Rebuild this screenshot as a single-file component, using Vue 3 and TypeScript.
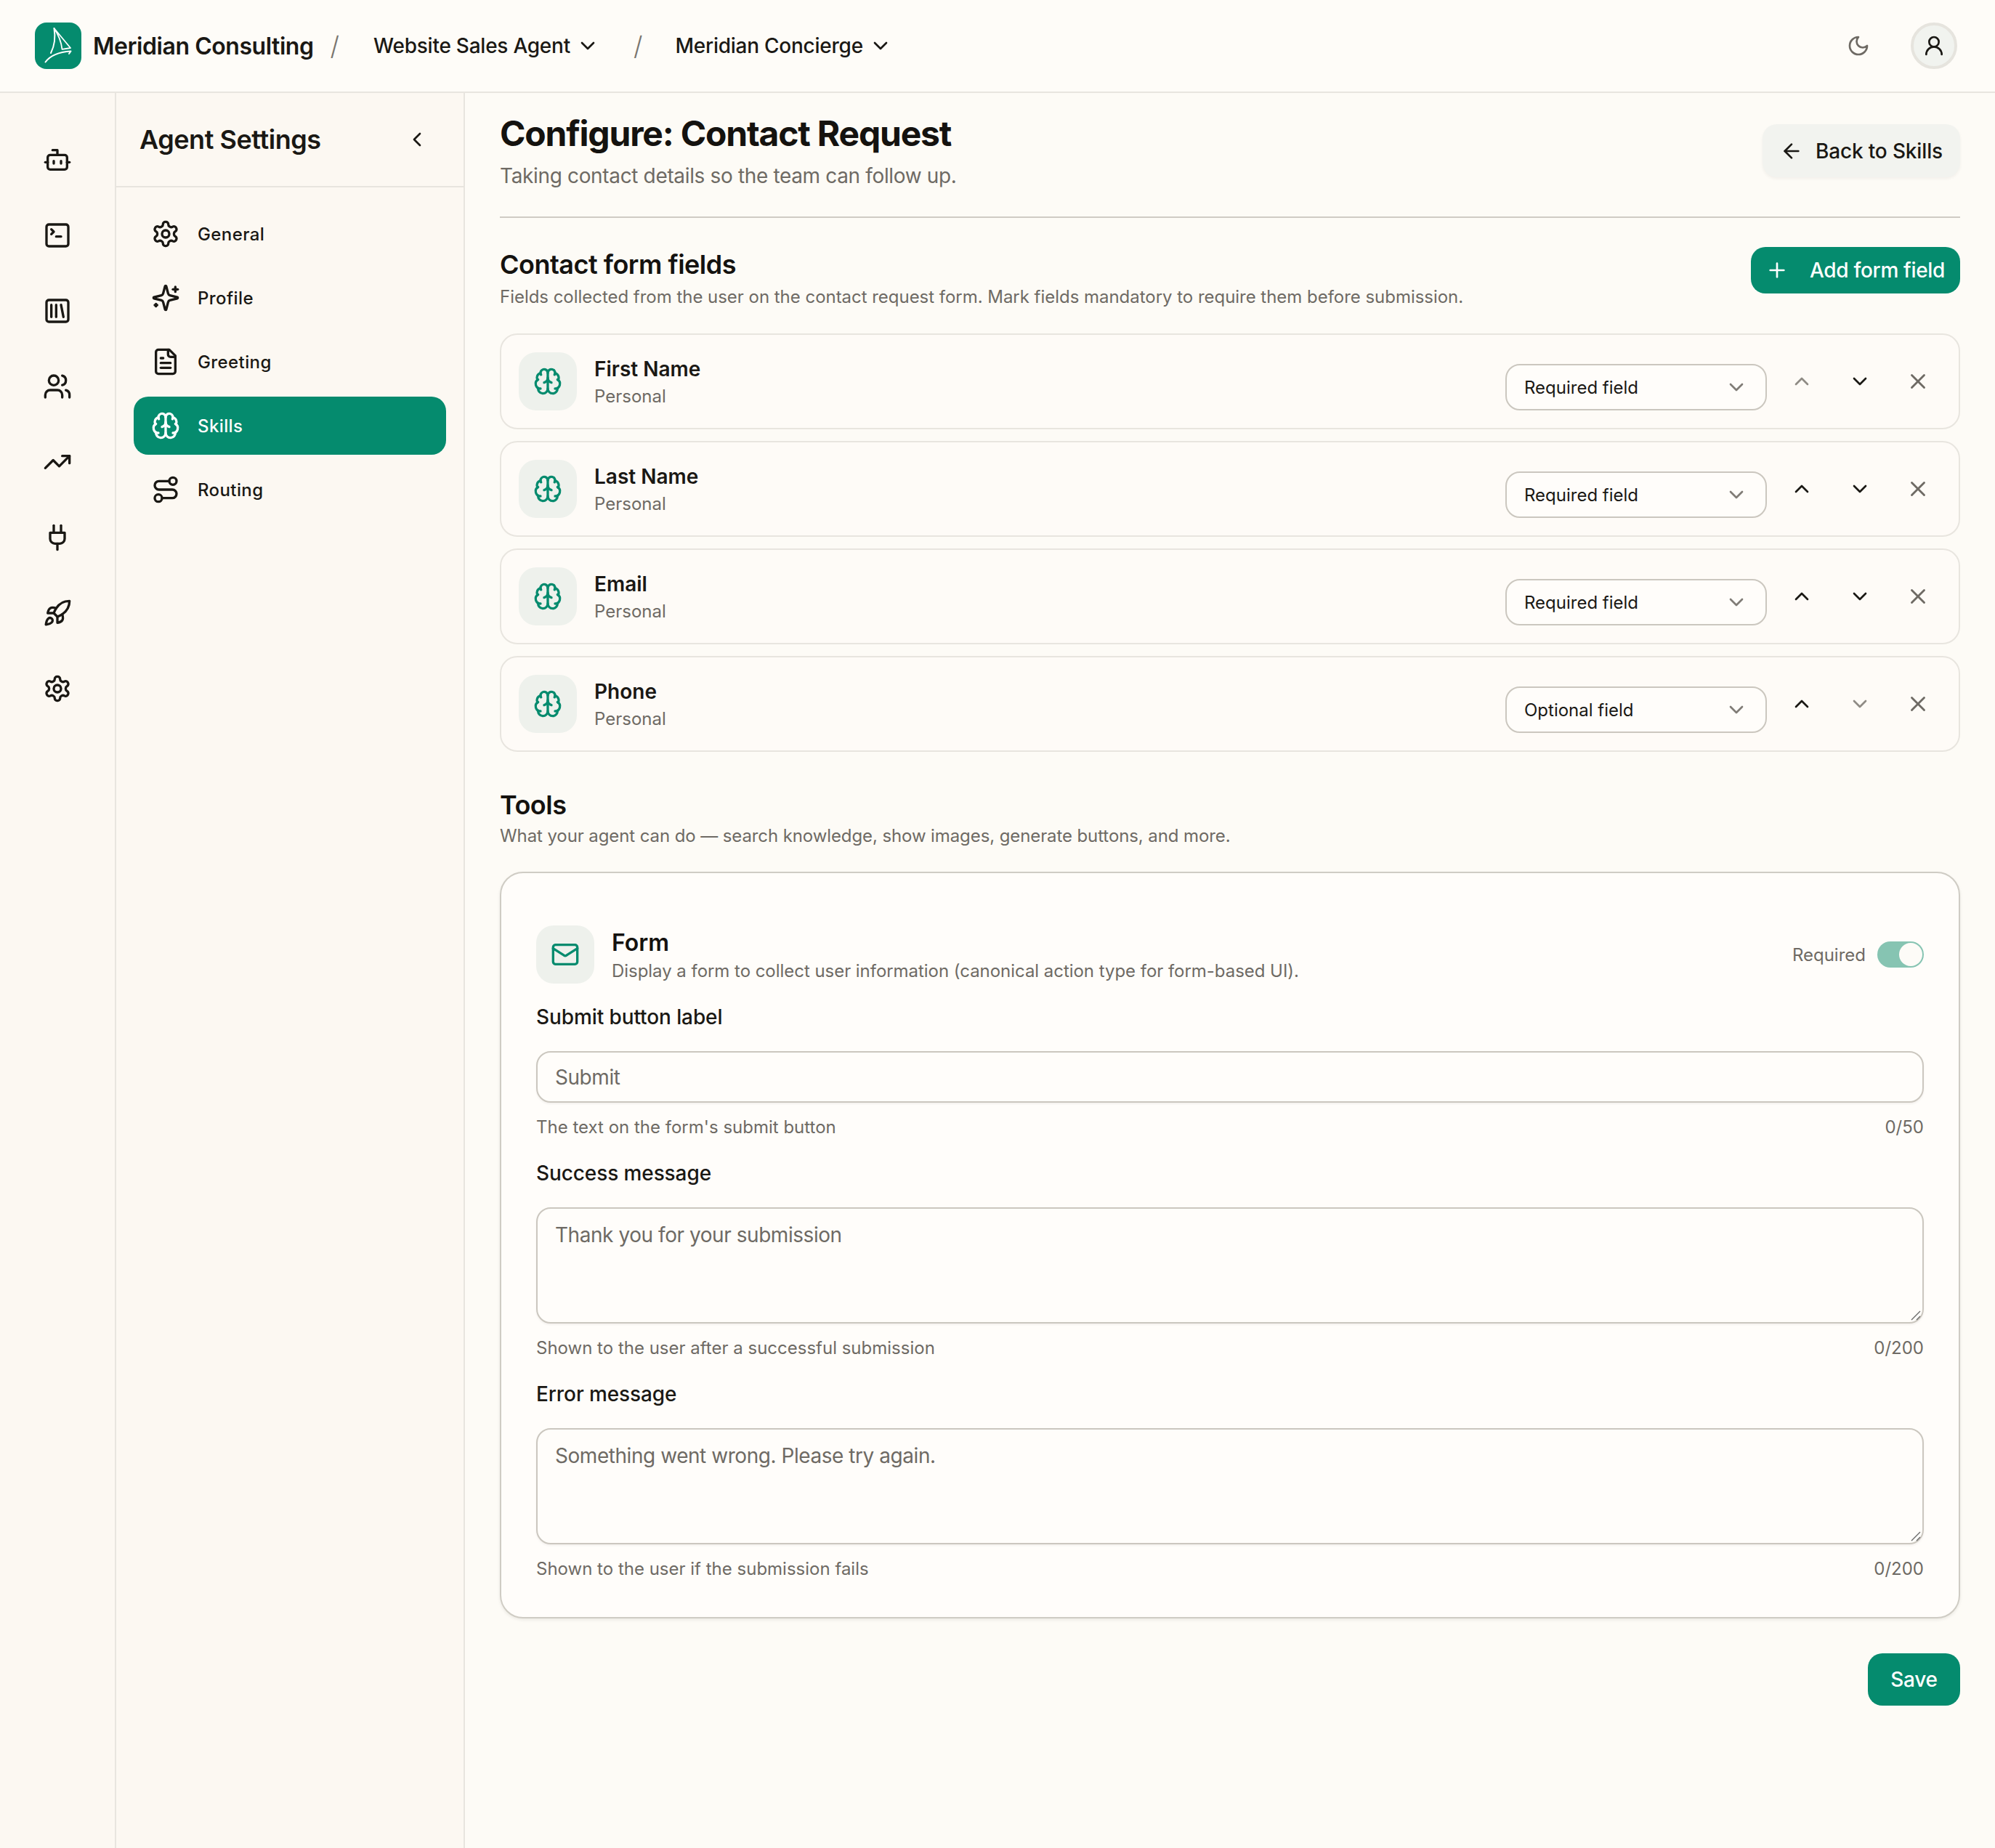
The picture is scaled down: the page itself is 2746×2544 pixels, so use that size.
<script setup lang="ts">
import { h } from 'vue'

const icons: Record<string, string[]> = {
  bot: ['M12 8V4H8', 'M6 8h12a2 2 0 0 1 2 2v8a2 2 0 0 1-2 2H6a2 2 0 0 1-2-2v-8a2 2 0 0 1 2-2z', 'M2 14h2', 'M20 14h2', 'M15 13v2', 'M9 13v2'],
  terminal: ['m7 11 2-2-2-2', 'M11 13h4', 'M5 3h14a2 2 0 0 1 2 2v14a2 2 0 0 1-2 2H5a2 2 0 0 1-2-2V5a2 2 0 0 1 2-2z'],
  library: ['M5 3h14a2 2 0 0 1 2 2v14a2 2 0 0 1-2 2H5a2 2 0 0 1-2-2V5a2 2 0 0 1 2-2z', 'M7 7v10', 'M11 7v10', 'm15 7 2 10'],
  users: ['M16 21v-2a4 4 0 0 0-4-4H6a4 4 0 0 0-4 4v2', 'M13 7a4 4 0 1 1-8 0 4 4 0 0 1 8 0z', 'M22 21v-2a4 4 0 0 0-3-3.87', 'M16 3.13a4 4 0 0 1 0 7.75'],
  trending: ['M22 7 13.5 15.5 8.5 10.5 2 17', 'M16 7h6v6'],
  plug: ['M12 22v-5', 'M9 8V2', 'M15 8V2', 'M18 8v5a4 4 0 0 1-4 4h-4a4 4 0 0 1-4-4V8Z'],
  rocket: ['M4.5 16.5c-1.5 1.26-2 5-2 5s3.74-.5 5-2c.71-.84.7-2.13-.09-2.91a2.18 2.18 0 0 0-2.91-.09z', 'm12 15-3-3a22 22 0 0 1 2-3.95A12.88 12.88 0 0 1 22 2c0 2.72-.78 7.5-6 11a22.35 22.35 0 0 1-4 2z', 'M9 12H4s.55-3.03 2-4c1.62-1.08 5 0 5 0', 'M12 15v5s3.03-.55 4-2c1.08-1.62 0-5 0-5'],
  settings: ['M12.22 2h-.44a2 2 0 0 0-2 2v.18a2 2 0 0 1-1 1.73l-.43.25a2 2 0 0 1-2 0l-.15-.08a2 2 0 0 0-2.73.73l-.22.38a2 2 0 0 0 .73 2.73l.15.1a2 2 0 0 1 1 1.72v.51a2 2 0 0 1-1 1.74l-.15.09a2 2 0 0 0-.73 2.73l.22.38a2 2 0 0 0 2.73.73l.15-.08a2 2 0 0 1 2 0l.43.25a2 2 0 0 1 1 1.73V20a2 2 0 0 0 2 2h.44a2 2 0 0 0 2-2v-.18a2 2 0 0 1 1-1.73l.43-.25a2 2 0 0 1 2 0l.15.08a2 2 0 0 0 2.73-.73l.22-.39a2 2 0 0 0-.73-2.73l-.15-.08a2 2 0 0 1-1-1.74v-.5a2 2 0 0 1 1-1.74l.15-.09a2 2 0 0 0 .73-2.73l-.22-.38a2 2 0 0 0-2.73-.73l-.15.08a2 2 0 0 1-2 0l-.43-.25a2 2 0 0 1-1-1.73V4a2 2 0 0 0-2-2z', 'M15 12a3 3 0 1 1-6 0 3 3 0 0 1 6 0z'],
  sparkles: ['M9.937 15.5A2 2 0 0 0 8.5 14.063l-6.135-1.582a.5.5 0 0 1 0-.962L8.5 9.936A2 2 0 0 0 9.937 8.5l1.582-6.135a.5.5 0 0 1 .963 0L14.063 8.5A2 2 0 0 0 15.5 9.937l6.135 1.581a.5.5 0 0 1 0 .964L15.5 14.063a2 2 0 0 0-1.437 1.437l-1.582 6.135a.5.5 0 0 1-.963 0z', 'M20 3v4', 'M22 5h-4', 'M4 17v2', 'M5 18H3'],
  file: ['M15 2H6a2 2 0 0 0-2 2v16a2 2 0 0 0 2 2h12a2 2 0 0 0 2-2V7Z', 'M14 2v4a2 2 0 0 0 2 2h4', 'M10 9H8', 'M16 13H8', 'M16 17H8'],
  brain: ['M12 18V5', 'M15 13a4.17 4.17 0 0 1-3-4 4.17 4.17 0 0 1-3 4', 'M17.598 6.5A3 3 0 1 0 12 5a3 3 0 1 0-5.598 1.5', 'M17.997 5.125a4 4 0 0 1 2.526 5.77', 'M18 18a4 4 0 0 0 2-7.464', 'M19.967 17.483A4 4 0 1 1 12 18a4 4 0 1 1-7.967-.517', 'M6 18a4 4 0 0 1-2-7.464', 'M6.003 5.125a4 4 0 0 0-2.526 5.77'],
  route: ['M9 19a3 3 0 1 1-6 0 3 3 0 0 1 6 0z', 'M9 19h8.5a3.5 3.5 0 0 0 0-7h-11a3.5 3.5 0 0 1 0-7H15', 'M21 5a3 3 0 1 1-6 0 3 3 0 0 1 6 0z'],
  moon: ['M12 3a6 6 0 0 0 9 9 9 9 0 1 1-9-9Z'],
  user: ['M17 8a5 5 0 1 1-10 0 5 5 0 0 1 10 0z', 'M20 21a8 8 0 0 0-16 0'],
  down: ['m6 9 6 6 6-6'],
  up: ['m18 15-6-6-6 6'],
  left: ['m15 18-6-6 6-6'],
  arrowLeft: ['m12 19-7-7 7-7', 'M19 12H5'],
  plus: ['M5 12h14', 'M12 5v14'],
  x: ['M18 6 6 18', 'm6 6 12 12'],
  mail: ['M4 4h16a2 2 0 0 1 2 2v12a2 2 0 0 1-2 2H4a2 2 0 0 1-2-2V6a2 2 0 0 1 2-2z', 'm22 7-8.991 5.727a2 2 0 0 1-2.009 0L2 7'],
}

const Icon = (props: { name: string; size?: number }) =>
  h(
    'svg',
    {
      width: props.size ?? 40,
      height: props.size ?? 40,
      viewBox: '0 0 24 24',
      fill: 'none',
      stroke: 'currentColor',
      'stroke-width': 2,
      'stroke-linecap': 'round',
      'stroke-linejoin': 'round',
    },
    icons[props.name].map((d) => h('path', { d })),
  )
Icon.props = ['name', 'size']

const railIcons = ['bot', 'terminal', 'library', 'users', 'trending', 'plug', 'rocket', 'settings']
const navItems = [
  { label: 'General', icon: 'settings', active: false },
  { label: 'Profile', icon: 'sparkles', active: false },
  { label: 'Greeting', icon: 'file', active: false },
  { label: 'Skills', icon: 'brain', active: true },
  { label: 'Routing', icon: 'route', active: false },
]
const fields = [
  { name: 'First Name', mode: 'Required field', upOff: true, downOff: false },
  { name: 'Last Name', mode: 'Required field', upOff: false, downOff: false },
  { name: 'Email', mode: 'Required field', upOff: false, downOff: false },
  { name: 'Phone', mode: 'Optional field', upOff: false, downOff: true },
]
</script>

<template>
  <div class="page">
    <header class="topbar">
      <div class="logo">
        <svg width="64" height="64" viewBox="0 0 64 64" fill="none" stroke="#fff" stroke-linecap="round" stroke-linejoin="round">
          <path d="M26.5 8 L49 35 L37.5 36.8 C36.5 28 34.5 20 26.5 8 Z" stroke-width="1.8" />
          <path d="M26.5 8 C28.5 20 27 32 22 42" stroke-width="2" />
          <path d="M14.5 54.5 C21 45.5 34 40.5 49.5 39.5 L47 43" stroke-width="2" />
        </svg>
      </div>
      <span class="brand">Meridian Consulting</span>
      <span class="slash slash-a">/</span>
      <button class="crumb crumb-a">Website Sales Agent<Icon name="down" :size="32" /></button>
      <span class="slash slash-b">/</span>
      <button class="crumb crumb-b">Meridian Concierge<Icon name="down" :size="32" /></button>
      <div class="top-right">
        <span class="moon"><Icon name="moon" :size="32" /></span>
        <span class="avatar"><Icon name="user" :size="32" /></span>
      </div>
    </header>

    <div class="body">
      <aside class="rail">
        <span v-for="name in railIcons" :key="name" class="rail-item"><Icon :name="name" /></span>
      </aside>

      <aside class="side">
        <div class="side-head">
          <h2>Agent Settings</h2>
          <Icon name="left" :size="32" />
        </div>
        <nav class="side-nav">
          <a v-for="item in navItems" :key="item.label" class="nav-item" :class="{ active: item.active }">
            <Icon :name="item.icon" />
            <span class="nav-label">{{ item.label }}</span>
          </a>
        </nav>
      </aside>

      <main class="main">
        <div class="page-head">
          <div>
            <h1>Configure: Contact Request</h1>
            <p class="lead">Taking contact details so the team can follow up.</p>
          </div>
          <button class="back-btn"><Icon name="arrowLeft" :size="32" />Back to Skills</button>
        </div>

        <section class="fields-head">
          <div class="fields-copy">
            <h3>Contact form fields</h3>
            <p class="note">Fields collected from the user on the contact request form. Mark fields mandatory to require them before submission.</p>
          </div>
          <button class="add-btn"><Icon name="plus" :size="32" />Add form field</button>
        </section>

        <div class="field-list">
          <div v-for="f in fields" :key="f.name" class="field-card">
            <span class="icon-box"><Icon name="brain" /></span>
            <div class="field-text">
              <div class="field-name">{{ f.name }}</div>
              <div class="field-kind">Personal</div>
            </div>
            <div class="select"><span>{{ f.mode }}</span><Icon name="down" :size="32" /></div>
            <div class="row-actions">
              <button class="act" :class="{ off: f.upOff }"><Icon name="up" :size="32" /></button>
              <button class="act" :class="{ off: f.downOff }"><Icon name="down" :size="32" /></button>
              <button class="act del"><Icon name="x" :size="34" /></button>
            </div>
          </div>
        </div>

        <section class="tools-head">
          <h3>Tools</h3>
          <p class="note">What your agent can do — search knowledge, show images, generate buttons, and more.</p>
        </section>

        <div class="form-card">
          <div class="form-top">
            <span class="icon-box"><Icon name="mail" /></span>
            <div class="form-title">
              <div class="form-name">Form</div>
              <div class="form-desc">Display a form to collect user information (canonical action type for form-based UI).</div>
            </div>
            <div class="req">
              <span>Required</span>
              <span class="toggle"><span class="thumb"></span></span>
            </div>
          </div>

          <div class="group">
            <label class="label">Submit button label</label>
            <input class="input" placeholder="Submit" />
            <div class="help"><span>The text on the form's submit button</span><span>0/50</span></div>
          </div>
          <div class="group">
            <label class="label">Success message</label>
            <div class="area-wrap">
              <textarea class="input area" placeholder="Thank you for your submission"></textarea>
              <svg class="grip" width="14" height="14" viewBox="0 0 14 14"><path d="M1 13 13 1M8 13l5-5" stroke="#6a6a6a" stroke-width="1.4" fill="none" /></svg>
            </div>
            <div class="help"><span>Shown to the user after a successful submission</span><span>0/200</span></div>
          </div>
          <div class="group">
            <label class="label">Error message</label>
            <div class="area-wrap">
              <textarea class="input area" placeholder="Something went wrong. Please try again."></textarea>
              <svg class="grip" width="14" height="14" viewBox="0 0 14 14"><path d="M1 13 13 1M8 13l5-5" stroke="#6a6a6a" stroke-width="1.4" fill="none" /></svg>
            </div>
            <div class="help"><span>Shown to the user if the submission fails</span><span>0/200</span></div>
          </div>
        </div>

        <div class="save-row"><button class="save">Save</button></div>
      </main>
    </div>
  </div>
</template>

<style>
html, body { margin: 0; background: #fdfbf6; }
</style>

<style scoped>
* { box-sizing: border-box; }
.page {
  width: 2746px;
  height: 2544px;
  display: flex;
  flex-direction: column;
  overflow: hidden;
  background: #fdfbf6;
  color: #1a1814;
  font-family: Inter, "Liberation Sans", sans-serif;
}
button { font-family: inherit; border: 0; background: none; color: inherit; padding: 0; }

.topbar {
  height: 128px;
  flex: none;
  display: flex;
  align-items: center;
  padding: 0 52px 0 48px;
  background: #fefcf8;
  border-bottom: 2px solid #e8e5df;
}
.logo { width: 64px; height: 64px; border-radius: 16px; background: #058b6e; flex: none; display: flex; }
.brand { margin-left: 16px; font-size: 32px; font-weight: 600; letter-spacing: -0.45px; color: #1a1814; }
.slash { font-size: 36px; color: #79756f; font-weight: 300; }
.slash-a { margin-left: 23px; }
.slash-b { margin-left: 47px; }
.crumb { display: flex; align-items: center; gap: 8px; font-size: 28px; font-weight: 500; letter-spacing: -0.25px; }
.crumb-a { margin-left: 47px; }
.crumb-b { margin-left: 45px; }
.top-right { margin-left: auto; display: flex; align-items: center; gap: 56px; }
.moon { display: flex; color: #6e6a64; }
.avatar {
  width: 64px; height: 64px; border-radius: 50%;
  background: #f1f3ef; border: 4px solid #e6e4de;
  display: flex; align-items: center; justify-content: center;
}

.body { flex: 1; display: flex; min-height: 0; }
.rail {
  width: 160px; flex: none;
  display: flex; flex-direction: column; align-items: center;
  gap: 24px;
  padding-top: 52px;
  background: #fcf8f2;
  border-right: 2px solid #e8e5df;
}
.rail-item { width: 80px; height: 80px; display: flex; align-items: center; justify-content: center; }

.side { width: 480px; flex: none; background: #fcf8f2; border-right: 2px solid #e8e5df; }
.side-head {
  height: 130px;
  display: flex; align-items: center; justify-content: space-between;
  padding: 0 48px 0 32px;
  border-bottom: 2px solid #e8e5df;
}
.side-head h2 { margin: 0; font-size: 36px; font-weight: 600; letter-spacing: -0.45px; }
.side-nav { display: flex; flex-direction: column; gap: 8px; padding: 24px; }
.nav-item {
  height: 80px; border-radius: 20px; padding: 0 24px;
  display: flex; align-items: center; gap: 24px;
  font-size: 24px; font-weight: 500; letter-spacing: 0.4px;
}
.nav-label { padding-top: 1px; }
.nav-item.active { background: #058b6e; color: #fff; }

.main { flex: 1; min-width: 0; padding: 0 48px; display: flex; flex-direction: column; }
.page-head {
  height: 172px;
  flex: none;
  display: flex; justify-content: space-between; align-items: flex-start;
  padding-top: 30px;
  border-bottom: 2px solid #cfcbc4;
}
h1 { margin: 0; font-size: 48px; line-height: 52px; font-weight: 700; letter-spacing: -1.2px; color: #14120f; }
.lead { margin: 12px 0 0; font-size: 28px; line-height: 40px; color: #6e6a64; letter-spacing: -0.35px; }
.back-btn {
  margin-top: 13px;
  height: 73px; padding: 0 24px;
  display: flex; align-items: center; gap: 17px;
  border-radius: 20px;
  background: #f2f3ef;
  box-shadow: 0 2px 4px rgba(30, 25, 15, 0.05);
  font-size: 28px; font-weight: 500; letter-spacing: -0.15px;
}

h3 { margin: 0; font-size: 36px; line-height: 44px; font-weight: 600; letter-spacing: -0.5px; color: #14120f; }
.note { margin: 6px 0 0; font-size: 24px; line-height: 34px; letter-spacing: -0.03px; color: #6e6a64; }
.fields-head { display: flex; justify-content: space-between; align-items: flex-start; padding-top: 40px; flex: none; }
.fields-copy { margin-top: 2px; }
.add-btn {
  height: 64px; padding: 0 21px 0 20px;
  display: flex; align-items: center; gap: 29px;
  background: #058b6e; color: #fff; border-radius: 20px;
  font-size: 28px; font-weight: 500; letter-spacing: -0.33px;
}
.field-list { display: flex; flex-direction: column; gap: 16px; margin-top: 33px; flex: none; }
.field-card {
  height: 132px; padding: 24px;
  display: flex; align-items: center;
  background: #fefbf7;
  border: 2px solid #e8e5df; border-radius: 24px;
}
.icon-box {
  width: 80px; height: 80px; flex: none;
  display: flex; align-items: center; justify-content: center;
  background: #eef1ec; color: #058b6e; border-radius: 24px;
}
.field-text { margin-left: 24px; flex: 1; }
.field-name { font-size: 28px; line-height: 40px; font-weight: 600; color: #1a1814; }
.field-kind { font-size: 24px; line-height: 34px; margin-top: 1px; color: #6e6a64; }
.select {
  width: 360px; height: 64px; margin-top: 16px;
  display: flex; align-items: center; justify-content: space-between;
  padding: 0 24px;
  background: #fffdfa;
  border: 2px solid #cbc7bf; border-radius: 20px;
  font-size: 24px;
}
.select svg { color: #807c76; }
.row-actions { display: flex; gap: 16px; margin-left: 16px; }
.act { width: 64px; height: 64px; display: flex; align-items: center; justify-content: center; color: #1a1814; }
.act.off { color: #8f8b85; }
.act.del { color: #6e6a64; }

.tools-head { margin-top: 51px; flex: none; }
.tools-head .note { margin-top: 4px; letter-spacing: -0.1px; }
.form-card {
  margin-top: 32px;
  height: 1028px;
  flex: none;
  padding: 72px 48px 0;
  background: #fffdfa;
  border: 2px solid #cfccc4; border-radius: 32px;
  box-shadow: 0 2px 4px rgba(30, 25, 15, 0.08);
}
.form-top { display: flex; align-items: flex-start; height: 80px; margin-bottom: 26px; }
.form-title { margin-left: 24px; flex: 1; padding-top: 2px; }
.form-name { font-size: 32px; line-height: 44px; font-weight: 600; color: #14120f; }
.form-desc { font-size: 24px; line-height: 34px; letter-spacing: -0.04px; color: #6e6a64; }
.req { display: flex; align-items: center; gap: 16px; font-size: 24px; color: #6e6a64; margin-top: 22px; }
.toggle { width: 64px; height: 36px; border-radius: 18px; background: #86c4b2; display: flex; align-items: center; justify-content: flex-end; padding: 2px; }
.thumb { width: 32px; height: 32px; border-radius: 50%; background: #fdfbf7; }
.group { display: flex; flex-direction: column; }
.group + .group { margin-top: 26px; }
.label { font-size: 28px; line-height: 40px; font-weight: 500; letter-spacing: -0.1px; color: #1a1814; }
.input {
  margin-top: 27px;
  width: 100%; height: 71px;
  padding: 0 24px;
  font-family: inherit; font-size: 28px; letter-spacing: -0.45px;
  color: #1a1814;
  background: #fffdfa;
  border: 2px solid #cbc7bf; border-radius: 20px;
  box-shadow: 0 2px 3px rgba(30, 25, 15, 0.05);
  outline: none;
}
.input::placeholder { color: #6e6a64; opacity: 1; }
.area-wrap { position: relative; }
.area { height: 160px; padding: 18px 24px; line-height: 36px; display: block; resize: none; }
.grip { position: absolute; right: 4px; bottom: 4px; }
.help { display: flex; justify-content: space-between; margin-top: 17px; font-size: 24px; line-height: 34px; color: #6e6a64; }

.save-row { display: flex; justify-content: flex-end; margin-top: 48px; flex: none; }
.save { width: 127px; height: 72px; background: #058b6e; color: #fff; border-radius: 20px; font-size: 28px; font-weight: 500; letter-spacing: -0.3px; }
</style>
